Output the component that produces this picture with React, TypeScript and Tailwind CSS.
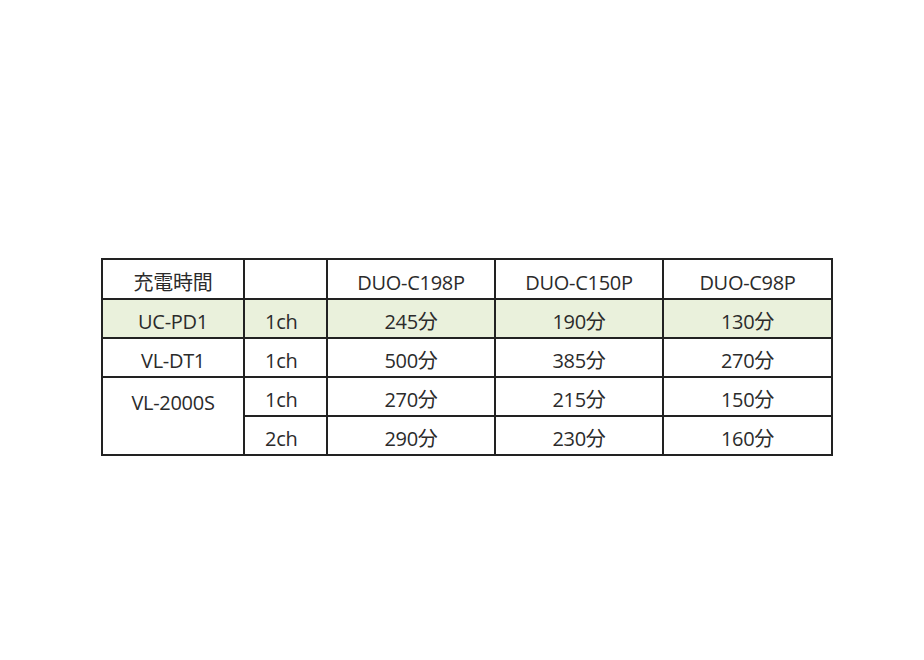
import React from 'react'

const models = ['DUO-C198P', 'DUO-C150P', 'DUO-C98P']

const rows = [
  { name: 'UC-PD1', ch: '1ch', values: ['245分', '190分', '130分'], highlight: true },
  { name: 'VL-DT1', ch: '1ch', values: ['500分', '385分', '270分'] },
  { name: 'VL-2000S', ch: '1ch', values: ['270分', '215分', '150分'], span: 2 },
  { name: null, ch: '2ch', values: ['290分', '230分', '160分'] }
]

const cell = 'border-2 border-[#222] p-0 pt-[7px] align-middle'

export default function App() {
  return (
    <div
      className="w-[924px] h-[660px] bg-white pt-[258px] pl-[101px] text-[#2b2b2b] text-[20px] leading-none tracking-[-0.3px]"
      style={{ fontFamily: '"Open Sans", "Noto Sans CJK JP", sans-serif' }}
    >
      <table className="table-fixed border-collapse w-[730px]">
        <colgroup>
          <col className="w-[142px]" />
          <col className="w-[83px]" />
          <col className="w-[168px]" />
          <col className="w-[168px]" />
          <col className="w-[169px]" />
        </colgroup>
        <thead>
          <tr className="h-[40px]">
            <th className={`${cell} font-normal text-center`}>充電時間</th>
            <th className={cell}></th>
            {models.map(m => (
              <th key={m} className={`${cell} font-normal text-center`}>{m}</th>
            ))}
          </tr>
        </thead>
        <tbody>
          {rows.map((r, i) => (
            <tr key={i} className={`h-[39px] ${r.highlight ? 'bg-[#eaf1dc]' : ''}`}>
              {r.name && (
                <td
                  rowSpan={r.span}
                  className={`${cell} text-center ${r.span ? '!align-top !pt-[15px]' : ''}`}
                >
                  {r.name}
                </td>
              )}
              <td className={`${cell} text-left pl-[20px]`}>{r.ch}</td>
              {r.values.map((v, j) => (
                <td key={j} className={`${cell} text-center`}>{v}</td>
              ))}
            </tr>
          ))}
        </tbody>
      </table>
    </div>
  )
}
